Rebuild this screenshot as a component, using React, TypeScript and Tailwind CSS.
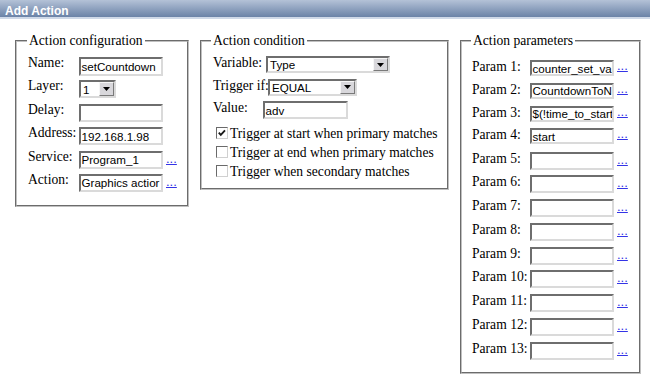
import React from "react";

const sans = "font-['Liberation_Sans',Arial,sans-serif]";

function TextBox({ value, className }: { value?: string; className: string }) {
  return (
    <div
      className={`border-2 border-t-[#6e6e6e] border-l-[#6e6e6e] border-r-[#dadada] border-b-[#dadada] bg-white overflow-x-clip whitespace-nowrap ${sans} text-[11.6px] leading-[13px] text-black pl-[0.5px] flex items-center ${className}`}
    >
      {value}
    </div>
  );
}

function Select({ value, className }: { value: string; className: string }) {
  return (
    <div
      className={`flex border-2 border-t-[#6e6e6e] border-l-[#6e6e6e] border-r-[#dadada] border-b-[#dadada] bg-white ${className}`}
    >
      <div className={`flex-1 pl-[2px] flex items-center ${sans} text-[11.6px] leading-[13px] text-black whitespace-nowrap`}>
        {value}
      </div>
      <div className="w-[15px] h-full bg-[#d8d7db] border border-t-[#f6f6f6] border-l-[#f6f6f6] border-r-[#7a7a7a] border-b-[#7a7a7a] flex items-center justify-center">
        <svg width="7" height="4" viewBox="0 0 7 4">
          <path d="M0 0h7L3.5 4z" fill="#000" />
        </svg>
      </div>
    </div>
  );
}

function Dots() {
  return (
    <span className={`ml-[3px] mb-[4px] ${sans} text-[13px] leading-[12px] text-[#3434e6] underline`}>...</span>
  );
}

function CheckBox({ checked }: { checked?: boolean }) {
  return (
    <div className="w-[12px] h-[12px] border border-t-[#6a6a6a] border-l-[#6a6a6a] border-r-[#d0d0d0] border-b-[#d0d0d0] bg-white flex items-center justify-center">
      {checked && (
        <svg width="10" height="10" viewBox="0 0 10 10">
          <polyline points="1.8,4.6 3.8,6.8 8,2.4" fill="none" stroke="#1a1a1a" strokeWidth="1.9" />
        </svg>
      )}
    </div>
  );
}

const fieldsetCls = "border-2 [border-style:groove] border-[#c0c0c0] p-0 m-0 min-w-0";
const legendCls = "px-[2px] text-[13.6px] leading-[16px] text-black whitespace-nowrap";

export default function App() {
  const params: { label: string; value?: string; h: string }[] = [
    { label: "Param 1:", value: "counter_set_val", h: "h-[22.8px]" },
    { label: "Param 2:", value: "CountdownToN", h: "h-[22.8px]" },
    { label: "Param 3:", value: "$(!time_to_start", h: "h-[22.8px]" },
    { label: "Param 4:", value: "start", h: "h-[23.3px]" },
    { label: "Param 5:", h: "h-[23.75px]" },
    { label: "Param 6:", h: "h-[23.75px]" },
    { label: "Param 7:", h: "h-[23.75px]" },
    { label: "Param 8:", h: "h-[23.75px]" },
    { label: "Param 9:", h: "h-[23.75px]" },
    { label: "Param 10:", h: "h-[23.75px]" },
    { label: "Param 11:", h: "h-[23.75px]" },
    { label: "Param 12:", h: "h-[23.75px]" },
    { label: "Param 13:", h: "h-[18px]" },
  ];

  const cfgRows: { label: string; el: React.ReactNode }[] = [
    { label: "Name:", el: <TextBox value="setCountdown" className="w-[84px] h-[19px]" /> },
    { label: "Layer:", el: <Select value="1" className="w-[37px] h-[18px]" /> },
    { label: "Delay:", el: <TextBox className="w-[84px] h-[18px]" /> },
    { label: "Address:", el: <TextBox value="192.168.1.98" className="w-[84px] h-[18px]" /> },
    {
      label: "Service:",
      el: (
        <div className="flex items-end">
          <TextBox value="Program_1" className="w-[84px] h-[18px]" />
          <Dots />
        </div>
      ),
    },
    {
      label: "Action:",
      el: (
        <div className="flex items-end">
          <TextBox value="Graphics actior" className="w-[84px] h-[18px]" />
          <Dots />
        </div>
      ),
    },
  ];

  return (
    <div className="w-[650px] h-[380px] bg-white overflow-hidden font-['Liberation_Serif','Times_New_Roman',serif] text-black">
      <div className="h-[19px] bg-linear-to-b from-[#b4c2d7] to-[#6b83a7] border-b-2 border-[#cfd9e8] pl-[5px] pt-[4px]">
        <div className={`${sans} font-bold text-[12px] leading-[14px] text-white`}>Add Action</div>
      </div>

      <div className="flex items-start pl-[15px] pt-[14px] gap-[11px]">
        {/* Action configuration */}
        <fieldset className={`${fieldsetCls} w-[174px]`}>
          <legend className={`ml-[10px] ${legendCls}`}>Action configuration</legend>
          <div className="pl-[11px] pt-[8px] pb-[8px] flex flex-col">
            {cfgRows.map((r) => (
              <div key={r.label} className="flex items-start h-[23.4px] text-[13.6px]">
                <span className="w-[51px] shrink-0 -mt-[2px] leading-[16px] whitespace-nowrap">{r.label}</span>
                {r.el}
              </div>
            ))}
          </div>
        </fieldset>

        {/* Action condition */}
        <fieldset className={`${fieldsetCls} w-[249px]`}>
          <legend className={`ml-[9px] ${legendCls}`}>Action condition</legend>
          <div className="pl-[11px] pt-[7px] pb-[7px] flex flex-col text-[13.6px]">
            <div className="flex items-start h-[22.5px]">
              <span className="w-[53px] shrink-0 -mt-[1px] leading-[16px]">Variable:</span>
              <Select value="Type" className="w-[124px] h-[17px]" />
            </div>
            <div className="flex items-start h-[22.5px]">
              <span className="w-[55px] shrink-0 -mt-[1px] leading-[16px] whitespace-nowrap">Trigger if:</span>
              <Select value="EQUAL" className="w-[89px] h-[17px]" />
            </div>
            <div className="flex items-start h-[22.5px]">
              <span className="w-[50px] shrink-0 -mt-[1px] leading-[16px]">Value:</span>
              <TextBox value="adv" className="w-[85px] h-[18px]" />
            </div>
            {[
              { t: "Trigger at start when primary matches", c: true },
              { t: "Trigger at end when primary matches", c: false },
              { t: "Trigger when secondary matches", c: false },
            ].map((r) => (
              <div key={r.t} className="flex items-center h-[19px] pl-[3px] gap-[2px] whitespace-nowrap leading-[19px]">
                <CheckBox checked={r.c} />
                <span>{r.t}</span>
              </div>
            ))}
          </div>
        </fieldset>

        {/* Action parameters */}
        <fieldset className={`${fieldsetCls} w-[181px]`}>
          <legend className={`ml-[9px] ${legendCls}`}>Action parameters</legend>
          <div className="pl-[10px] pt-[11px] pb-[12px] flex flex-col text-[13.6px]">
            {params.map((p) => (
              <div key={p.label} className={`flex items-start ${p.h}`}>
                <span className="w-[58px] shrink-0 -mt-[1px] leading-[16px] whitespace-nowrap">{p.label}</span>
                <div className="flex items-end">
                  <TextBox value={p.value} className={`w-[84px] ${p.value ? "h-[16px]" : "h-[18px]"}`} />
                  <Dots />
                </div>
              </div>
            ))}
          </div>
        </fieldset>
      </div>
    </div>
  );
}
